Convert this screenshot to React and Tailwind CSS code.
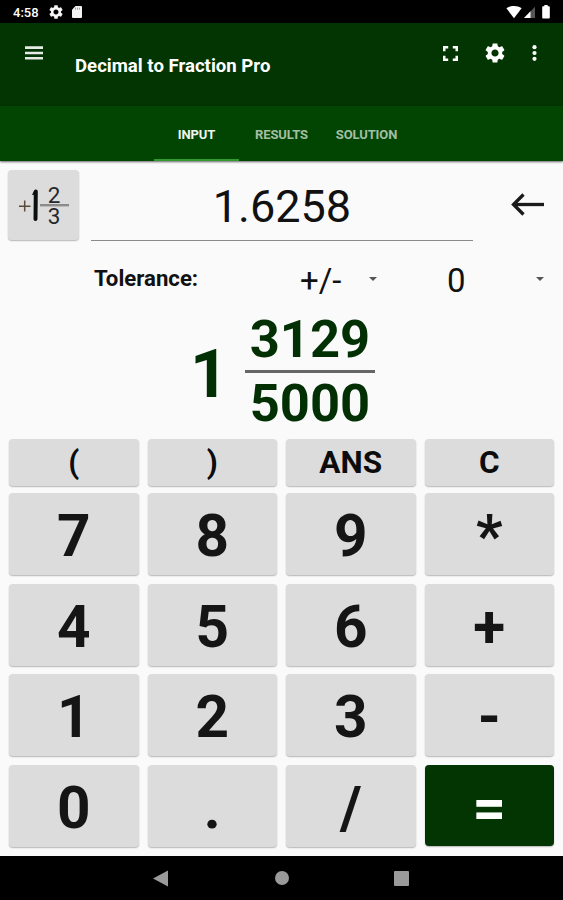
import React from "react";

const shadow = "shadow-[0_1px_1.5px_rgba(0,0,0,0.28)]";

const GEAR =
  "M19.140 12.940c.040-.3.060-.610.060-.940 0-.320-.020-.640-.070-.940l2.030-1.580c.180-.140.230-.410.120-.610l-1.920-3.320c-.120-.220-.370-.290-.590-.220l-2.390.960c-.5-.380-1.030-.7-1.620-.940l-.360-2.540c-.040-.240-.240-.410-.480-.410h-3.840c-.240 0-.430.170-.470.410l-.360 2.540c-.590.240-1.130.570-1.620.940l-2.390-.960c-.220-.080-.470 0-.590.220L2.740 8.870c-.120.210-.080.470.120.610l2.030 1.580c-.050.3-.090.630-.090.940s.020.640.070.940l-2.030 1.580c-.180.140-.230.410-.120.610l1.920 3.320c.120.220.370.290.590.220l2.390-.960c.5.380 1.030.7 1.620.940l.360 2.540c.050.240.240.410.480.410h3.840c.240 0 .440-.170.470-.410l.360-2.540c.590-.240 1.130-.560 1.620-.940l2.390.960c.220.080.470 0 .590-.220l1.920-3.320c.120-.220.070-.470-.120-.610zM12 15.600c-1.980 0-3.600-1.620-3.600-3.600s1.620-3.600 3.600-3.600 3.600 1.620 3.600 3.600-1.620 3.600-3.600 3.600z";

function StatusBar() {
  return (
    <div className="flex h-[23px] items-center bg-black pl-[13px] pr-[13px] text-white">
      <span className="w-[27px] pt-[2px] text-[13px] font-medium leading-none">4:58</span>
      <svg className="ml-[9px] mt-[1px]" width="14" height="14" viewBox="2 2 20 20" fill="#f4f4f4">
        <path d={GEAR} />
      </svg>
      <svg className="ml-[8px] mt-[1px]" width="12" height="14" viewBox="0 0 12 14" fill="#f4f4f4">
        <path d="M4.5 1H10a1 1 0 0 1 1 1v10a1 1 0 0 1-1 1H2a1 1 0 0 1-1-1V4.700z" />
        <path d="M4.500 2.600v2M6.500 2.600v2M8.500 2.600v2" stroke="#777" strokeWidth=".7" />
      </svg>
      <div className="ml-auto flex items-center">
        <svg width="16" height="14" viewBox="0 0 16 14" fill="#fff">
          <path d="M.4 3.300C4.600.2 11.400.2 15.600 3.300L8 13.200z" />
        </svg>
        <svg className="ml-[2px]" width="12" height="14" viewBox="0 0 12 14">
          <path d="M11 1.700V13H0z" fill="#555" />
          <path d="M6.500 6.300V13H0z" fill="#fff" />
        </svg>
        <svg className="ml-[6px]" width="8" height="14" viewBox="0 0 8 14" fill="#fff">
          <path d="M2.300 0h3.400v1.200H7q.8 0 .8.800v10.500q0 .9-.8.900H1q-.8 0-.8-.9V2q0-.8.8-.8h1.300z" />
        </svg>
      </div>
    </div>
  );
}

function Header() {
  return (
    <header className="flex h-[83px] items-start bg-[#023502] pl-[25px] pr-[26px] text-white">
      <svg className="mt-[23px]" width="18" height="14" viewBox="0 0 18 14" fill="#e6ebe6">
        <path d="M0 .3h18v2.600H0zM0 5.700h18v2.600H0zM0 11h18v2.600H0z" />
      </svg>
      <h1 className="ml-[32px] mt-[31px] whitespace-nowrap text-[18.600px] font-bold leading-[25px]">
        Decimal to Fraction Pro
      </h1>
      <div className="ml-auto flex h-[60px] items-center">
        <svg width="15" height="15" viewBox="0 0 15 15" fill="none" stroke="#fff" strokeWidth="2.500">
          <path d="M1.250 5.200V1.250H5.200M9.800 1.250h3.950V5.200M13.750 9.800v3.950H9.800M5.200 13.750H1.250V9.800" />
        </svg>
        <svg className="ml-[27px]" width="20" height="20" viewBox="2 2 20 20" fill="#fff">
          <path d={GEAR} />
        </svg>
        <svg className="ml-[27px]" width="5" height="16" viewBox="0 0 5 16" fill="#fff">
          <circle cx="2.500" cy="2.200" r="2.100" />
          <circle cx="2.500" cy="8" r="2.100" />
          <circle cx="2.500" cy="13.800" r="2.100" />
        </svg>
      </div>
    </header>
  );
}

function Tabs() {
  const base = "flex h-full items-center justify-center w-[85px]";
  return (
    <nav className="flex h-[55px] justify-center bg-[#024402] text-[13px] font-bold tracking-[-0.120px] text-[#a3bfa3] shadow-[0_1px_2px_rgba(0,0,0,0.6)]">
      <span className={base + " border-b-[2px] border-[#2f9a2f] pt-[4px] text-[#f0f5f0]"}>INPUT</span>
      <span className={base + " pt-[2px]"}>RESULTS</span>
      <span className={base + " pt-[2px]"}>SOLUTION</span>
    </nav>
  );
}

function FractionModeButton() {
  return (
    <button className={"h-[70px] w-[71px] rounded-[4px] bg-[#dcdcdc] " + shadow}>
      <svg width="71" height="70" viewBox="0 0 71 70" className="block">
        <path d="M11 36.300h11.500M16.700 30.500v11" stroke="#5b4c3a" strokeWidth="1.500" />
        <path d="M27.800 21.500L27.500 49" stroke="#0b0f10" strokeWidth="4" strokeLinecap="round" />
        <path d="M26.500 21.500L24.700 25" stroke="#0b0f10" strokeWidth="1.500" />
        <path d="M32 35.200h29" stroke="#8b8b8b" strokeWidth="2.400" />
        <text x="46" y="33.200" textAnchor="middle" fontSize="22.500" fill="#24272c">2</text>
        <text x="46" y="53.500" textAnchor="middle" fontSize="22.500" fill="#24272c">3</text>
      </svg>
    </button>
  );
}

function Caret() {
  return (
    <svg width="8" height="4" viewBox="0 0 8 4" fill="#555" className="-mt-[2px]">
      <path d="M0 0h8L4 4z" />
    </svg>
  );
}

function InputRow() {
  return (
    <div className="flex items-start pl-[8px] pt-[9px]">
      <FractionModeButton />
      <div className="ml-[12px] flex h-[71px] w-[382px] items-center justify-center border-b border-[#8a8a8a] pt-[2px] text-[45px] leading-none text-[#111]">
        1.6258
      </div>
      <svg className="ml-[38px] mt-[23px]" width="34" height="24" viewBox="0 0 34 24" fill="none" stroke="#1a1a1a" strokeWidth="3.300">
        <path d="M2 11.500h31" />
        <path d="M12.500 1.500L2.500 11.500l10 10" />
      </svg>
    </div>
  );
}

function ToleranceRow() {
  return (
    <div className="flex h-[54px] items-center pl-[94px] text-[#111]">
      <span className="w-[206px] pb-[3px] text-[22.200px] font-bold leading-none">Tolerance:</span>
      <span className="w-[69px] text-[33px] leading-none">+/-</span>
      <Caret />
      <span className="ml-[70px] w-[89px] text-[33px] leading-none">0</span>
      <Caret />
    </div>
  );
}

function Result() {
  return (
    <div className="flex h-[132px] pl-[190px] font-bold text-[#022f04]">
      <span className="w-[55px] pt-[31px] text-[67px] leading-[72px]">1</span>
      <div className="w-[130px] text-center text-[52.500px]">
        <div className="h-[66px] border-b-[3px] border-[#666] pt-[2px] leading-[60px]">3129</div>
        <div className="leading-[60px]">5000</div>
      </div>
    </div>
  );
}

const KEYS = ["7", "8", "9", "*", "4", "5", "6", "+", "1", "2", "3", "-", "0", ".", "/", "="];

function Keypad() {
  return (
    <div className="px-[9px]">
      <div className="grid grid-cols-4 gap-x-[9px] text-[31.500px] font-bold text-[#0c0c0c]">
        {["(", ")", "ANS", "C"].map((k) => (
          <button key={k} className={"flex h-[46.500px] items-center justify-center rounded-[4px] bg-[#dcdcdc] leading-none " + shadow}>
            {k}
          </button>
        ))}
      </div>
      <div className="mt-[7.500px] grid grid-cols-4 gap-x-[9px] gap-y-[8.600px] text-[58.500px] font-bold">
        {KEYS.map((k) => (
          <button
            key={k}
            className={
              "flex items-center justify-center rounded-[4px] pt-[5px] leading-none " +
              (k === "=" ? "h-[81px] bg-[#023502] text-white " : "h-[82px] bg-[#dcdcdc] text-[#151515] ") +
              shadow
            }
          >
            {k}
          </button>
        ))}
      </div>
    </div>
  );
}

function NavBar() {
  return (
    <div className="flex h-[44px] items-center bg-black pl-[153px]">
      <svg width="15" height="17" viewBox="0 0 15 17" fill="#9a9a9a">
        <path d="M15 .5v16L0 8.500z" />
      </svg>
      <div className="ml-[107px] size-[14px] rounded-full bg-[#9a9a9a]" />
      <div className="ml-[105px] size-[15px] rounded-[1px] bg-[#9a9a9a]" />
    </div>
  );
}

export default function App() {
  return (
    <div className="flex h-[900px] w-[563px] flex-col overflow-hidden bg-[#fafafa] font-[Roboto,sans-serif]">
      <StatusBar />
      <Header />
      <Tabs />
      <main className="flex-1">
        <InputRow />
        <div className="pt-[12px]">
          <ToleranceRow />
        </div>
        <Result />
        <Keypad />
      </main>
      <NavBar />
    </div>
  );
}
